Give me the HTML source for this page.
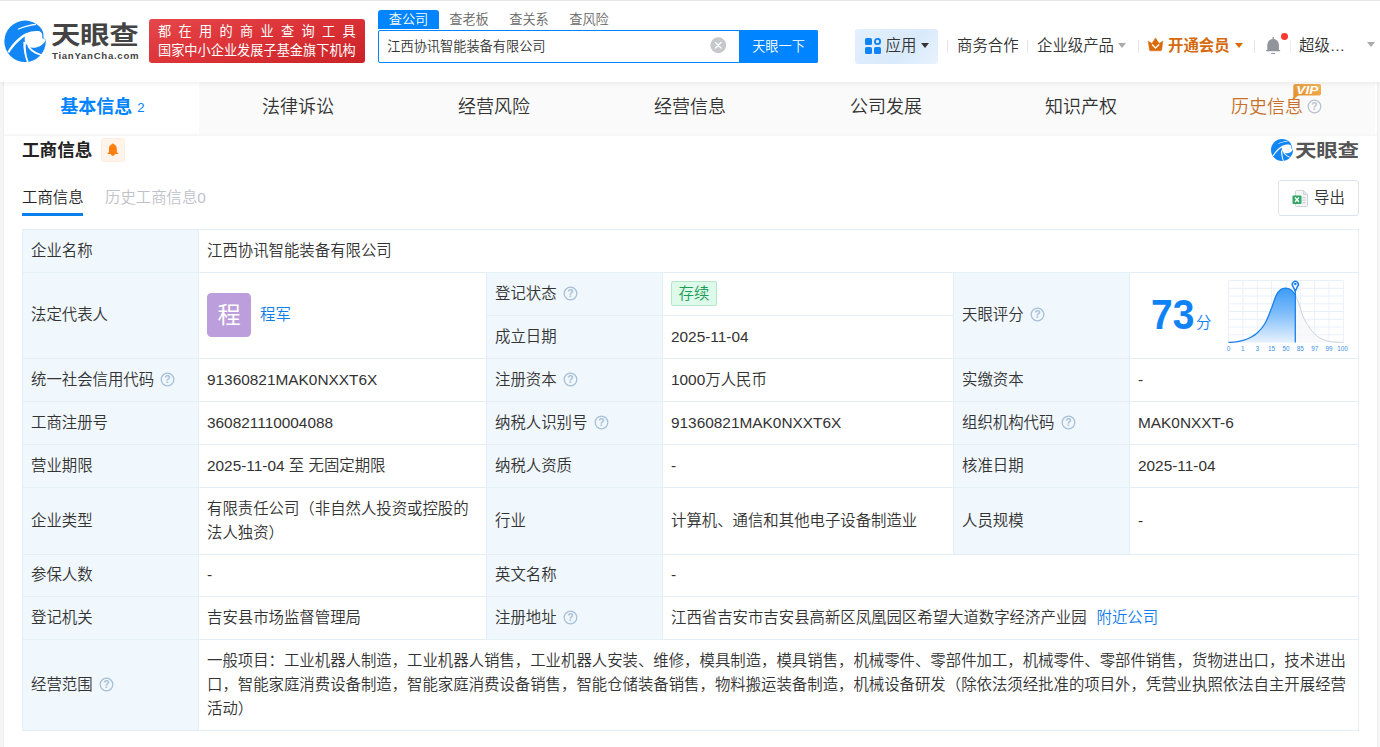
<!DOCTYPE html>
<html lang="zh-CN">
<head>
<meta charset="utf-8">
<title>江西协讯智能装备有限公司 - 天眼查</title>
<style>
*{box-sizing:border-box;margin:0;padding:0}
html,body{width:1380px;height:747px;overflow:hidden}
body{font-weight:350;background:#f5f5f5;font-family:"Liberation Sans","Noto Sans CJK SC",sans-serif;color:#333;font-size:14px;position:relative}
.abs{position:absolute}
a{text-decoration:none;color:#0f7de8}
/* header */
#hdr{position:absolute;left:0;top:0;width:1380px;height:82px;background:#fff;box-shadow:0 2px 4px rgba(0,0,0,.06);z-index:5}
#banner{position:absolute;left:149px;top:17px;width:216px;height:44px;border-radius:3px;background:linear-gradient(165deg,#e5474b 0%,#dc3439 45%,#cb2227 100%);color:#fff;font-weight:400;font-size:13.2px;line-height:19px;padding:2.500px 0 0 9px;white-space:nowrap;overflow:hidden}
#banner .l1{letter-spacing:7.300px;display:block}
#banner .l2{display:block}
.stab{position:absolute;top:8px;height:19px;line-height:19px;font-size:13.200px;color:#666;text-align:center}
.stab.on{background:#0084ff;color:#fff;border-radius:3px 3px 0 0}
#sbox{position:absolute;left:378px;top:28px;width:440px;height:33px;border:1px solid #0084ff;border-radius:2px;background:#fff}
#sbox .txt{position:absolute;left:8.300px;top:0;line-height:31px;font-size:13.200px;color:#333;white-space:nowrap}
#sbtn{position:absolute;left:739px;top:28px;width:79px;height:33px;background:#0084ff;color:#fff;font-size:13.200px;line-height:33px;text-align:center;border-radius:0 2px 2px 0}
.hm{position:absolute;top:27px;height:33px;line-height:33px;font-size:14px;color:#333;white-space:nowrap}
.sep{position:absolute;top:37.5px;width:1px;height:13px;background:#e3e5ea}
.caret{display:inline-block;width:0;height:0;border-left:4.300px solid transparent;border-right:4.300px solid transparent;border-top:5px solid #999;vertical-align:middle;margin-left:4.500px;position:relative;top:-1.600px}
/* nav */
#nav{position:absolute;left:4px;top:82px;width:1371px;height:52px;background:#fafafa}
#nav .t{position:absolute;top:0;width:196px;height:52px;line-height:50px;text-align:center;font-size:18px;color:#333;white-space:nowrap}
#nav .t.on{background:#fff;color:#0084ff;font-weight:bold}
#main{position:absolute;left:4px;top:134px;width:1373px;height:613px;background:#fff}
#wbg{position:absolute;left:3px;top:82px;width:1375px;height:665px;background:#fff;border-left:1px solid #eee;border-right:1px solid #eee}
/* table */
#tb{position:absolute;left:22px;top:229px;width:1337px;border-collapse:collapse;table-layout:fixed;font-size:14px;color:#333}
#tb td{border:1px solid #e4eef6;padding:0 8px;line-height:24.2px;vertical-align:middle;background:#fff;font-size:15.4px}
#tb td.k{background:#f0f7fd}
.q{display:inline-block;vertical-align:middle;margin-left:6.300px;position:relative;top:-1.500px}

.av{display:inline-block;position:relative;left:0;top:-1px;width:44px;height:44px;border-radius:4.5px;background:#bb9edb;color:#fff;font-size:23.200px;line-height:44.500px;text-align:center;font-weight:400;vertical-align:middle}
.nm{display:inline-block;vertical-align:middle;margin-left:9px;position:relative;top:0;color:#0f7de8}
.bdg{display:inline-block;height:25px;line-height:23px;padding:0 6.600px;border:1px solid #b5e5c8;border-radius:2px;background:#defaea;color:#1f9d57;font-size:15.4px}
</style>
</head>
<body>
<div id="hdr"><div class="abs" style="left:0;top:0;width:1380px;height:1px;background:#e4e4e4"></div><div class="abs" style="left:0;top:2px;width:1380px;height:80px">
<svg class="abs" style="left:0;top:12px" width="56" height="54" viewBox="0 0 775 747">
<circle cx="347" cy="378" r="287" fill="#1286f5"/>
<path d="M365,266C420,238 500,226 548,240C584,256 592,296 584,334L634,356C612,410 560,450 500,463C450,471 410,461 385,441C362,421 350,396 345,381C335,341 345,301 365,266Z" fill="#fff"/>
<path d="M104,522C168,408 268,306 368,258L378,294C296,332 198,428 126,540Z" fill="#fff"/>
<path d="M324,383C318,480 340,582 373,666L395,658C364,576 350,480 358,388Z" fill="#fff"/>
<path d="M381,450C418,516 488,558 565,576L573,558C502,536 442,498 404,440Z" fill="#fff"/>
<path d="M241,207C320,166 420,141 503,134L500,152C420,162 330,185 254,217Z" fill="#fff"/>
<path d="M581,213C600,250 607,300 601,337L640,357L665,300L640,213Z" fill="#fff"/>
</svg>
<div class="abs" style="left:51px;top:16px;font-size:29.5px;line-height:36px;font-weight:700;color:#444;letter-spacing:-.4px;white-space:nowrap;transform:scaleY(.84);transform-origin:0 50%">天眼查</div>
<div class="abs" style="left:52px;top:48px;font-size:9.600px;line-height:12px;font-weight:bold;color:#444;letter-spacing:.720px;white-space:nowrap">TianYanCha.com</div>
<div id="banner"><span class="l1">都在用的商业查询工具</span><span class="l2">国家中小企业发展子基金旗下机构</span></div>
<div class="stab on" style="left:378px;width:61px">查公司</div>
<div class="stab" style="left:439px;width:60px">查老板</div>
<div class="stab" style="left:499px;width:60px">查关系</div>
<div class="stab" style="left:559px;width:60px">查风险</div>
<div id="sbox"><span class="txt">江西协讯智能装备有限公司</span>
<svg class="abs" style="left:330.700px;top:6.200px" width="16.500" height="16.500" viewBox="0 0 16 16"><circle cx="8" cy="8" r="7.700" fill="#c6c8cc"/><path d="M5.300,5.300L10.700,10.700M10.700,5.300L5.300,10.700" stroke="#fff" stroke-width="1.200" stroke-linecap="round"/></svg>
</div>
<div id="sbtn">天眼一下</div>
<div class="abs" style="left:855px;top:27px;width:83px;height:35px;border-radius:3px;background:linear-gradient(135deg,#e3f0fd 0%,#d9eafc 60%,#e8f2fd 100%)"></div>
<svg class="abs" style="left:864.500px;top:36.300px" width="17" height="17" viewBox="0 0 17 17"><rect x="0" y="0" width="7" height="7" rx="1.6" fill="#1184f5"/><rect x="0" y="9" width="7" height="7" rx="1.6" fill="#1184f5"/><rect x="9" y="9" width="7" height="7" rx="1.6" fill="#1184f5"/><circle cx="12.5" cy="3.5" r="2.6" fill="none" stroke="#1184f5" stroke-width="1.9"/></svg>
<div class="hm" style="left:885.500px;font-size:15.4px">应用<span class="caret" style="border-top-color:#333;margin-left:5px"></span></div>
<div class="sep" style="left:947px"></div>
<div class="hm" style="left:957px;font-size:15.4px">商务合作</div>
<div class="sep" style="left:1027px"></div>
<div class="hm" style="left:1037px;font-size:15.4px">企业级产品<span class="caret" style="border-top-color:#aaa"></span></div>
<div class="sep" style="left:1138px"></div>
<svg class="abs" style="left:1147px;top:35px" width="18" height="15" viewBox="1147 37 18 15"><path d="M1148.200,41.100L1151.900,43.500L1155.500,37.900L1159.200,43.500L1162.900,41.100L1161.600,50C1161.500,50.500 1161.200,50.800 1160.700,50.800H1150.400C1149.900,50.800 1149.600,50.500 1149.500,50Z" fill="#d96b0c" stroke="#d96b0c" stroke-width=".5" stroke-linejoin="round"/><path d="M1152.400,44.700L1155.550,48.100L1158.800,44.700" fill="none" stroke="#fff8ee" stroke-width="1.400" stroke-linecap="round" stroke-linejoin="round"/></svg>
<div class="hm" style="left:1168px;font-size:15.4px;font-weight:bold;color:#d56a10">开通会员<span class="caret" style="border-top-color:#d96b0c;margin-left:5px"></span></div>
<div class="sep" style="left:1254px"></div>
<svg class="abs" style="left:1264px;top:34px" width="20" height="20" viewBox="1264 36 20 20"><g fill="#90959b"><rect x="1272.500" y="37.100" width="1.300" height="2.500" rx=".5"/><path d="M1267.300,50.300V45.200C1267.300,41.400 1269.800,38.900 1273.100,38.900C1276.400,38.900 1278.900,41.400 1278.900,45.200V50.300Z"/><rect x="1265.900" y="49.900" width="14.400" height="1.400" rx=".7"/><rect x="1271.100" y="53" width="4.200" height="1.100" rx=".5"/></g></svg>
<div class="abs" style="left:1281px;top:31px;width:6.800px;height:6.800px;border-radius:50%;background:#fd3a31"></div>
<div class="sep" style="left:1290px;background:#eceef4"></div>
<div class="hm" style="left:1299px;font-size:15.4px">超级…</div>
<span class="caret" style="position:absolute;left:1362px;top:39.800px;border-top-color:#aaa"></span>
</div></div>
<div id="wbg"></div>
<div id="nav">
<div class="t on" style="left:0;width:195px;padding-left:2px">基本信息<span style="font-size:13.200px;font-weight:normal;margin-left:5px;position:relative;top:-1px">2</span></div>
<div class="t" style="left:196px">法律诉讼</div>
<div class="t" style="left:392px">经营风险</div>
<div class="t" style="left:588px">经营信息</div>
<div class="t" style="left:784px">公司发展</div>
<div class="t" style="left:979px">知识产权</div>
<div class="t" style="left:1174.300px;color:#c7712c">历史信息<svg class="q" style="margin-left:3.500px;top:-2px" width="15" height="15" viewBox="0 0 15 15"><circle cx="7.500" cy="7.500" r="6.300" fill="none" stroke="#b9c3cf" stroke-width="1.300"/><text x="7.500" y="11.200" text-anchor="middle" font-size="10.300" font-weight="bold" fill="#b9c3cf" font-family="Liberation Sans, sans-serif">?</text></svg></div>
<svg class="abs" style="left:1288px;top:1px" width="32" height="20" viewBox="0 0 32 20"><defs><linearGradient id="vg" x1="1" y1="0" x2="0" y2="1"><stop offset="0" stop-color="#f3b25a"/><stop offset="1" stop-color="#df8a22"/></linearGradient></defs><path d="M3.300,1H27a2,2 0 0 1 2,2V10.500a2,2 0 0 1 -2,2H6.500C4.500,13.500 2.500,15.800 1,18.500C1.800,15.500 1.300,13 1.300,10V3a2,2 0 0 1 2,-2Z" fill="url(#vg)"/><text x="4.300" y="10.600" font-family="Liberation Sans, sans-serif" font-size="10" font-weight="bold" font-style="italic" fill="#fff" textLength="22" lengthAdjust="spacingAndGlyphs">VIP</text></svg>
</div>
<div id="main">
<div class="abs" style="left:0;top:0;width:1373px;height:2px;background:#f7f7f7"></div>
<div class="abs" style="left:18px;top:4px;font-size:17.6px;line-height:24px;font-weight:bold;color:#222;white-space:nowrap">工商信息</div>
<div class="abs" style="left:97px;top:4px;width:24px;height:24px;border:1px solid #feeddc;border-radius:2.500px;background:#fff4ea"></div>
<svg class="abs" style="left:102.800px;top:9.300px" width="12" height="14" viewBox="0 0 12.240 14.280"><path d="M6,0.500C6.700,0.500 7.100,0.900 7.200,1.500C9,2.100 10,3.700 10,5.600V9C10,9.600 10.600,10.100 11.400,10.400V11.200H8C8,12.300 7.100,13.100 6,13.100C4.900,13.100 4,12.300 4,11.200H0.600V10.400C1.400,10.100 2,9.600 2,9V5.600C2,3.700 3,2.100 4.800,1.500C4.900,0.900 5.300,0.500 6,0.500Z" fill="#ff7f0e"/></svg>
<svg class="abs" style="left:1267px;top:5px" width="22" height="22" viewBox="60 91 574 574">
<circle cx="347" cy="378" r="287" fill="#1286f5"/>
<path d="M365,266C420,238 500,226 548,240C584,256 592,296 584,334L634,356C612,410 560,450 500,463C450,471 410,461 385,441C362,421 350,396 345,381C335,341 345,301 365,266Z" fill="#fff"/>
<path d="M104,522C168,408 268,306 368,258L378,294C296,332 198,428 126,540Z" fill="#fff"/>
<path d="M324,383C318,480 340,582 373,666L395,658C364,576 350,480 358,388Z" fill="#fff"/>
<path d="M381,450C418,516 488,558 565,576L573,558C502,536 442,498 404,440Z" fill="#fff"/>
<path d="M241,207C320,166 420,141 503,134L500,152C420,162 330,185 254,217Z" fill="#fff"/>
<path d="M581,213C600,250 607,300 601,337L640,357L665,300L640,213Z" fill="#fff"/>
</svg>
<div class="abs" style="left:1291px;top:3px;font-size:21.500px;line-height:28px;font-weight:700;color:#555;letter-spacing:-.3px;white-space:nowrap;transform:scaleY(.840);transform-origin:0 50%">天眼查</div>
<div class="abs" style="left:18px;top:51.500px;font-size:15.4px;line-height:24px;color:#222;white-space:nowrap">工商信息</div>
<div class="abs" style="left:18px;top:79px;width:61px;height:3px;background:#0a80ea"></div>
<div class="abs" style="left:101px;top:51.500px;font-size:15.4px;line-height:24px;color:#c0c2ca;white-space:nowrap">历史工商信息0</div>
<div class="abs" style="left:1274px;top:46px;width:81px;height:36px;border:1px solid #dde2ea;border-radius:3px;background:#fff"></div>
<svg class="abs" style="left:1288px;top:56px" width="17" height="17" viewBox="0 0 17 17"><path d="M4.500,0.500H11.500L15.500,4.500V15.500a1,1 0 0 1 -1,1H4.500a1,1 0 0 1 -1,-1V1.500a1,1 0 0 1 1,-1Z" fill="#f4f5f7" stroke="#cfd3da" stroke-width="1"/><path d="M11.500,0.500V4.500H15.500" fill="#e4e6ea" stroke="#cfd3da" stroke-width="1"/><rect x="10.500" y="7" width="3" height="1.200" fill="#c9ced6"/><rect x="10.500" y="9.500" width="3" height="1.200" fill="#c9ced6"/><rect x="10.500" y="12" width="3" height="1.200" fill="#c9ced6"/><rect x="0.500" y="5.500" width="9" height="8.500" rx="1" fill="#2fa866"/><path d="M3,7.500L7,12M7,7.500L3,12" stroke="#fff" stroke-width="1.400"/></svg>
<div class="abs" style="left:1310px;top:52px;font-size:15.4px;line-height:24px;color:#333;white-space:nowrap">导出</div>
</div>
<table id="tb" cellspacing="0">
<colgroup><col style="width:176px"><col style="width:288px"><col style="width:176px"><col style="width:291px"><col style="width:176px"><col style="width:229px"></colgroup>
<tr style="height:43px"><td class="k">企业名称</td><td colspan="5">江西协讯智能装备有限公司</td></tr>
<tr style="height:43px"><td class="k" rowspan="2">法定代表人</td><td rowspan="2"><span class="av">程</span><a class="nm">程军</a></td><td class="k">登记状态<svg class="q" width="15" height="15" viewBox="0 0 15 15"><circle cx="7.500" cy="7.500" r="6.300" fill="none" stroke="#a7bfd7" stroke-width="1.300"/><text x="7.500" y="11.200" text-anchor="middle" font-size="10.300" font-weight="bold" fill="#a7bfd7" font-family="Liberation Sans, sans-serif">?</text></svg></td><td><span class="bdg">存续</span></td><td class="k" rowspan="2">天眼评分<svg class="q" width="15" height="15" viewBox="0 0 15 15"><circle cx="7.500" cy="7.500" r="6.300" fill="none" stroke="#a7bfd7" stroke-width="1.300"/><text x="7.500" y="11.200" text-anchor="middle" font-size="10.300" font-weight="bold" fill="#a7bfd7" font-family="Liberation Sans, sans-serif">?</text></svg></td><td rowspan="2" style="position:relative;padding:0"><div class="abs" style="left:20.500px;top:17px;font-size:43px;line-height:48px;font-weight:bold;color:#0f82f5;white-space:nowrap;transform:scaleX(.905);transform-origin:0 0">73</div><div class="abs" style="left:66px;top:40px;font-size:15.4px;line-height:20px;color:#0f82f5">分</div><svg class="abs" style="left:0;top:0;overflow:visible" width="10" height="10" viewBox="1130 273 10 10">
<defs><linearGradient id="cg" x1="0" y1="0" x2="0" y2="1"><stop offset="0" stop-color="#3d9bf8"/><stop offset=".45" stop-color="#7dbcfa"/><stop offset="1" stop-color="#e6f1fd"/></linearGradient></defs>
<g stroke="#eaf0fa" stroke-width="1" fill="none">
<path d="M1228.500,280.500V342.500M1242.900,280.500V342.500M1257.200,280.500V342.500M1271.600,280.500V342.500M1286,280.500V342.500M1300.300,280.500V342.500M1314.700,280.500V342.500M1329,280.500V342.500M1343.400,280.500V342.500"/>
<path d="M1228.500,280.500H1343.400M1228.500,288.300H1343.400M1228.500,296H1343.400M1228.500,303.800H1343.400M1228.500,311.500H1343.400M1228.500,319.300H1343.400M1228.500,327H1343.400M1228.500,334.800H1343.400"/>
</g>
<path d="M1295.400,294.800C1296.000,296.200 1297.400,299.600 1298.700,303.200C1300.000,306.800 1301.500,312.800 1303.200,316.700C1304.900,320.600 1307.000,324.000 1308.900,326.900C1310.800,329.800 1312.800,332.200 1314.800,334.200C1316.800,336.200 1318.900,337.500 1321.200,338.700C1323.500,339.900 1326.000,340.700 1328.500,341.300C1331.000,341.900 1333.500,341.900 1336.000,342.100C1338.500,342.300 1342.200,342.300 1343.400,342.400L1295.400,342.400Z" fill="#f7f8fa" opacity=".8"/>
<path d="M1295.400,294.800C1296.000,296.200 1297.400,299.600 1298.700,303.200C1300.000,306.800 1301.500,312.800 1303.200,316.700C1304.900,320.600 1307.000,324.000 1308.900,326.900C1310.800,329.800 1312.800,332.200 1314.800,334.200C1316.800,336.200 1318.900,337.500 1321.200,338.700C1323.500,339.900 1326.000,340.700 1328.500,341.300C1331.000,341.900 1333.500,341.900 1336.000,342.100C1338.500,342.300 1342.200,342.300 1343.400,342.400" fill="none" stroke="#c8d2de" stroke-width="1"/>
<path d="M1228.400,342.400C1229.700,342.300 1233.500,342.100 1236.000,341.800C1238.500,341.500 1240.900,341.100 1243.300,340.400C1245.700,339.700 1248.100,338.800 1250.500,337.500C1252.900,336.200 1255.300,334.800 1257.700,332.500C1260.100,330.200 1262.700,327.600 1265.000,323.500C1267.300,319.400 1269.800,312.400 1271.700,307.700C1273.600,303.000 1274.700,298.400 1276.200,295.400C1277.700,292.400 1279.100,290.700 1280.700,289.500C1282.300,288.300 1283.900,288.100 1285.600,288.100C1287.300,288.100 1289.300,288.600 1290.900,289.700C1292.500,290.800 1294.700,293.900 1295.400,294.800L1295.400,342.400Z" fill="url(#cg)"/>
<path d="M1228.400,342.400C1229.700,342.300 1233.500,342.100 1236.000,341.800C1238.500,341.500 1240.900,341.100 1243.300,340.400C1245.700,339.700 1248.100,338.800 1250.500,337.500C1252.900,336.200 1255.300,334.800 1257.700,332.500C1260.100,330.200 1262.700,327.600 1265.000,323.500C1267.300,319.400 1269.800,312.400 1271.700,307.700C1273.600,303.000 1274.700,298.400 1276.200,295.400C1277.700,292.400 1279.100,290.700 1280.700,289.500C1282.300,288.300 1283.900,288.100 1285.600,288.100C1287.300,288.100 1289.300,288.600 1290.900,289.700C1292.500,290.800 1294.700,293.900 1295.400,294.800" fill="none" stroke="#1a80ea" stroke-width="1.300"/>
<path d="M1295.300,287V342.600" stroke="#1a80ea" stroke-width="1.300"/>
<path d="M1295.300,291.200L1293,286.400A3,3 0 1 1 1297.600,286.400Z" fill="#fff" stroke="#1a80ea" stroke-width="1.500" stroke-linejoin="round"/>
<circle cx="1295.300" cy="284" r="1.250" fill="#1a80ea"/>
<g font-family="Liberation Sans, sans-serif" font-size="6.400" fill="#3a8fe6" text-anchor="middle">
<text x="1228.500" y="351">0</text><text x="1242.900" y="351">1</text><text x="1257.200" y="351">3</text><text x="1271.600" y="351">15</text><text x="1286" y="351">50</text><text x="1300.300" y="351">85</text><text x="1314.700" y="351">97</text><text x="1329" y="351">99</text><text x="1342.500" y="351">100</text>
</g>
</svg></td></tr>
<tr style="height:43px"><td class="k">成立日期</td><td>2025-11-04</td></tr>
<tr style="height:43px"><td class="k">统一社会信用代码<svg class="q" width="15" height="15" viewBox="0 0 15 15"><circle cx="7.500" cy="7.500" r="6.300" fill="none" stroke="#a7bfd7" stroke-width="1.300"/><text x="7.500" y="11.200" text-anchor="middle" font-size="10.300" font-weight="bold" fill="#a7bfd7" font-family="Liberation Sans, sans-serif">?</text></svg></td><td>91360821MAK0NXXT6X</td><td class="k">注册资本<svg class="q" width="15" height="15" viewBox="0 0 15 15"><circle cx="7.500" cy="7.500" r="6.300" fill="none" stroke="#a7bfd7" stroke-width="1.300"/><text x="7.500" y="11.200" text-anchor="middle" font-size="10.300" font-weight="bold" fill="#a7bfd7" font-family="Liberation Sans, sans-serif">?</text></svg></td><td>1000万人民币</td><td class="k">实缴资本</td><td>-</td></tr>
<tr style="height:43px"><td class="k">工商注册号</td><td>360821110004088</td><td class="k">纳税人识别号<svg class="q" width="15" height="15" viewBox="0 0 15 15"><circle cx="7.500" cy="7.500" r="6.300" fill="none" stroke="#a7bfd7" stroke-width="1.300"/><text x="7.500" y="11.200" text-anchor="middle" font-size="10.300" font-weight="bold" fill="#a7bfd7" font-family="Liberation Sans, sans-serif">?</text></svg></td><td>91360821MAK0NXXT6X</td><td class="k">组织机构代码<svg class="q" width="15" height="15" viewBox="0 0 15 15"><circle cx="7.500" cy="7.500" r="6.300" fill="none" stroke="#a7bfd7" stroke-width="1.300"/><text x="7.500" y="11.200" text-anchor="middle" font-size="10.300" font-weight="bold" fill="#a7bfd7" font-family="Liberation Sans, sans-serif">?</text></svg></td><td>MAK0NXXT-6</td></tr>
<tr style="height:43px"><td class="k">营业期限</td><td>2025-11-04 至 无固定期限</td><td class="k">纳税人资质</td><td>-</td><td class="k">核准日期</td><td>2025-11-04</td></tr>
<tr style="height:67px"><td class="k">企业类型</td><td style="white-space:nowrap">有限责任公司（非自然人投资或控股的<br>法人独资）</td><td class="k">行业</td><td>计算机、通信和其他电子设备制造业</td><td class="k">人员规模</td><td>-</td></tr>
<tr style="height:42px"><td class="k">参保人数</td><td>-</td><td class="k">英文名称</td><td colspan="3">-</td></tr>
<tr style="height:43px"><td class="k">登记机关</td><td>吉安县市场监督管理局</td><td class="k">注册地址<svg class="q" width="15" height="15" viewBox="0 0 15 15"><circle cx="7.500" cy="7.500" r="6.300" fill="none" stroke="#a7bfd7" stroke-width="1.300"/><text x="7.500" y="11.200" text-anchor="middle" font-size="10.300" font-weight="bold" fill="#a7bfd7" font-family="Liberation Sans, sans-serif">?</text></svg></td><td colspan="3">江西省吉安市吉安县高新区凤凰园区希望大道数字经济产业园<a style="margin-left:10px">附近公司</a></td></tr>
<tr style="height:91px"><td class="k">经营范围<svg class="q" width="15" height="15" viewBox="0 0 15 15"><circle cx="7.500" cy="7.500" r="6.300" fill="none" stroke="#a7bfd7" stroke-width="1.300"/><text x="7.500" y="11.200" text-anchor="middle" font-size="10.300" font-weight="bold" fill="#a7bfd7" font-family="Liberation Sans, sans-serif">?</text></svg></td><td colspan="5" style="white-space:nowrap">一般项目：工业机器人制造，工业机器人销售，工业机器人安装、维修，模具制造，模具销售，机械零件、零部件加工，机械零件、零部件销售，货物进出口，技术进出<br>口，智能家庭消费设备制造，智能家庭消费设备销售，智能仓储装备销售，物料搬运装备制造，机械设备研发（除依法须经批准的项目外，凭营业执照依法自主开展经营<br>活动）</td></tr>
</table>
</body>
</html>
